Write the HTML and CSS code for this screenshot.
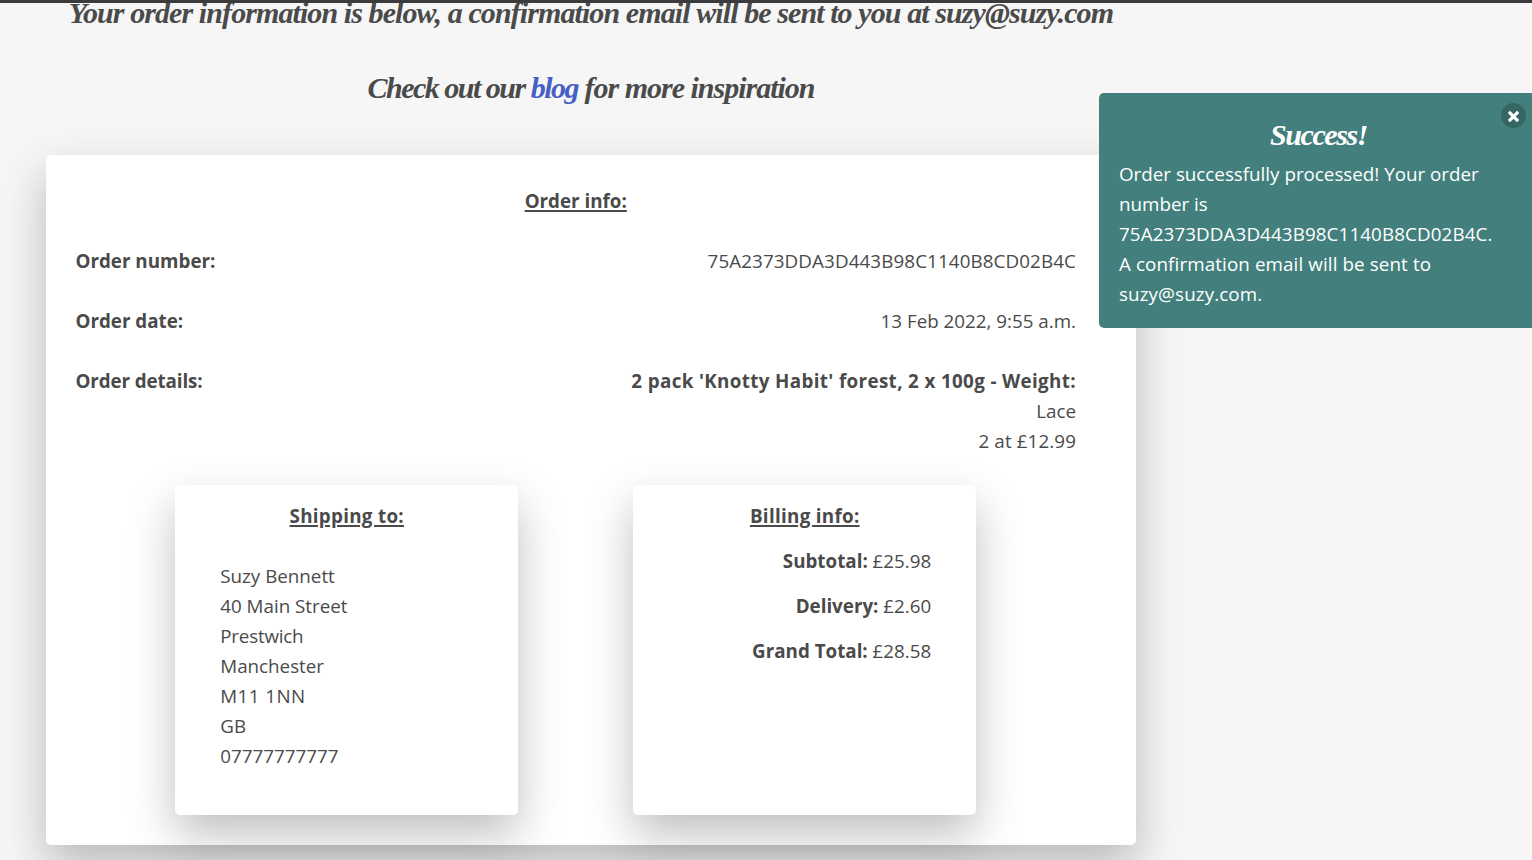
FILE: index.html
```html
<!DOCTYPE html>
<html lang="en">
<head>
<meta charset="utf-8">
<title>Order confirmation</title>
<link rel="stylesheet" href="styles.css">
</head>
<body>
<div class="nav-edge"></div>
<main class="page">
  <h2 class="script lead">Your order information is below, a confirmation email will be sent to you at suzy@suzy.com</h2>
  <h2 class="script blog-line"><span class="blog-intro">Check out our </span><a class="blog-link" href="#">blog</a> for more inspiration</h2>
  <section class="card order-card">
    <p class="title">Order info:</p>
    <div class="row"><strong>Order number:</strong><span class="code">75A2373DDA3D443B98C1140B8CD02B4C</span></div>
    <div class="row"><strong>Order date:</strong><span>13 Feb 2022, 9:55 a.m.</span></div>
    <div class="row"><strong class="details">Order details:</strong>
      <div class="item"><strong class="product">2 pack 'Knotty Habit' forest, 2 x 100g - Weight:</strong><span>Lace</span><span class="code">2 at £12.99</span></div>
    </div>
    <div class="boxes">
      <section class="card box">
        <p class="title box-title">Shipping to:</p>
        <div class="address"><span>Suzy Bennett</span><span>40 Main Street</span><span class="tight">Prestwich</span><span>Manchester</span><span class="postcode">M11 1NN</span><span>GB</span><span>07777777777</span></div>
      </section>
      <section class="card box">
        <p class="title box-title">Billing info:</p>
        <div class="totals"><p><strong>Subtotal:</strong> £25.98</p><p><strong>Delivery:</strong> £2.60</p><p><strong>Grand Total:</strong> £28.58</p></div>
      </section>
    </div>
  </section>
</main>
<aside class="toast">
  <button class="close" aria-label="Close"><svg width="13" height="13" viewBox="0 0 13 13"><path d="M1.9 1.9 11.1 11.1M11.1 1.9 1.9 11.1" stroke="#fff" stroke-width="3.2"/></svg></button>
  <h3 class="script toast-title">Success!</h3>
  <p class="message">Order successfully processed! Your order<br>number is<br><span class="code">75A2373DDA3D443B98C1140B8CD02B4C.</span><br><span class="code">A confirmation email will be sent to</span><br><span class="code">suzy@suzy.com.</span></p>
</aside>
</body>
</html>
```
FILE: styles.css
```css
* { box-sizing: border-box; }
html, body { height: 100%; }
body {
  margin: 0;
  overflow: hidden;
  position: relative;
  background: #f6f6f6;
  color: #4a4a4a;
  font: 400 18.8px/30px "Open Sans", "Noto Sans", sans-serif;
}
p, h2, h3 { margin: 0; }
strong { font-weight: 700; }
.nav-edge { position: relative; z-index: 1; height: 3px; background: #3b3b3d; }
.page { width: 1090px; margin-left: 46px; }
.script {
  font: italic 700 30px/38px "Liberation Serif", serif;
  text-align: center;
  white-space: nowrap;
}
.lead { height: 29px; line-height: 20px; letter-spacing: -.91px; }
.blog-line { margin-top: 37px; letter-spacing: -1px; }
.blog-intro { letter-spacing: -1.5px; }
.blog-link { color: #485fc7; text-decoration: none; letter-spacing: -1.5px; }
.card {
  background: #fff;
  border-radius: 5px;
  box-shadow: 0 20px 46px rgba(0, 0, 0, .25);
}
.order-card {
  display: flex;
  flex-direction: column;
  gap: 30px;
  height: 690px;
  margin-top: 48px;
  padding: 31px 60px 30px 29.5px;
}
.title {
  font-weight: 700;
  text-align: center;
  text-decoration: underline;
  text-decoration-thickness: 2px;
  text-underline-offset: 2px;
}
.box-title { letter-spacing: .3px; }
.row { display: flex; justify-content: space-between; }
.item { display: flex; flex-direction: column; align-items: flex-end; }
.code { letter-spacing: .11px; }
.details { letter-spacing: -.1px; }
.product { letter-spacing: .36px; }
.tight { letter-spacing: -.2px; }
.postcode { letter-spacing: .45px; }
.boxes { display: flex; justify-content: center; gap: 115px; margin: -1px .5px 0 -.5px; }
.box { width: 343px; height: 330px; padding: 16px 44.5px 16px 45.5px; }
.address {
  display: flex;
  flex-direction: column;
  align-items: flex-start;
  margin-top: 30px;
}
.totals {
  display: flex;
  flex-direction: column;
  align-items: flex-end;
  gap: 15px;
  margin-top: 15px;
}
.toast {
  position: absolute;
  top: 93px;
  right: 0;
  width: 433px;
  height: 235px;
  padding: 23px 20px 0;
  border-radius: 5px 0 0 5px;
  background: #427f7d;
  color: #fff;
}
.toast-title { padding-left: 6px; letter-spacing: -1.4px; }
.message { margin-top: 5px; white-space: nowrap; }
.close {
  position: absolute;
  top: 10px;
  right: 6px;
  display: grid;
  place-items: center;
  width: 25px;
  height: 25px;
  padding: 1px 0 0 0;
  border: 0;
  border-radius: 50%;
  background: #356664;
}
```
